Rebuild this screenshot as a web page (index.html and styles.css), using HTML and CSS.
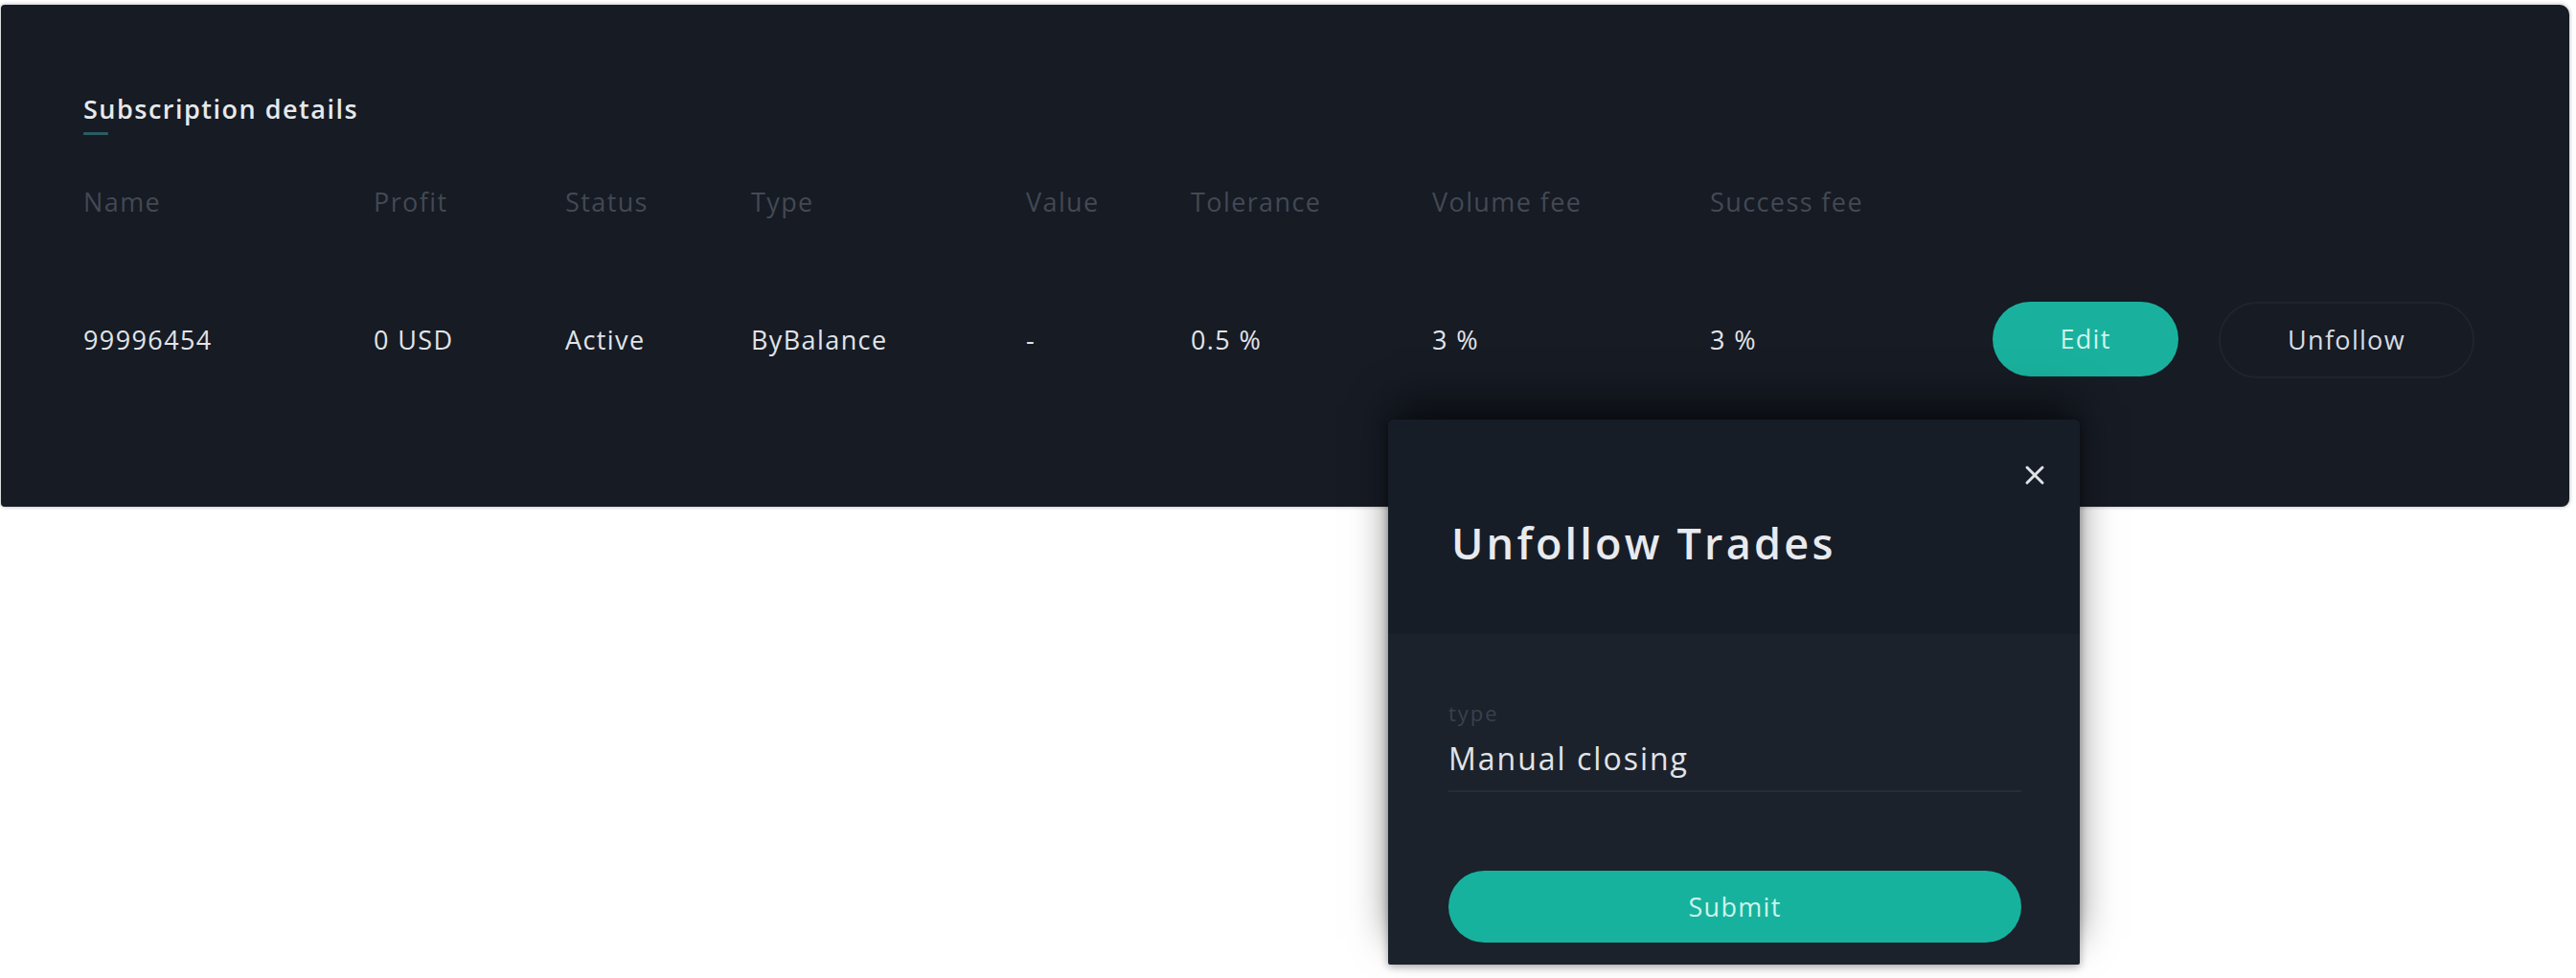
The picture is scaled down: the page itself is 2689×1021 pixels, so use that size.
FILE: index.html
```html
<!DOCTYPE html>
<html lang="en">
<head>
<meta charset="utf-8">
<title>Subscription details</title>
<link rel="stylesheet" href="styles.css">
</head>
<body>
<main class="page">
  <section class="panel">
    <h2 class="panel-title">Subscription details</h2>
    <div class="title-accent"></div>
    <div class="grid head">
      <span>Name</span>
      <span>Profit</span>
      <span>Status</span>
      <span>Type</span>
      <span>Value</span>
      <span>Tolerance</span>
      <span>Volume fee</span>
      <span>Success fee</span>
    </div>
    <div class="grid row">
      <span>99996454</span>
      <span>0 USD</span>
      <span>Active</span>
      <span>ByBalance</span>
      <span>-</span>
      <span>0.5 %</span>
      <span>3 %</span>
      <span>3 %</span>
      <div class="actions">
        <button class="btn btn-edit">Edit</button>
        <button class="btn btn-unfollow">Unfollow</button>
      </div>
    </div>
  </section>

  <div class="modal">
    <div class="modal-head">
      <button class="close" aria-label="Close">
        <svg viewBox="0 0 22 22" width="22" height="22"><path d="M3 3 L19 19 M19 3 L3 19" stroke="#dfe2e6" stroke-width="3" stroke-linecap="round"/></svg>
      </button>
      <h3 class="modal-title">Unfollow Trades</h3>
    </div>
    <div class="modal-body">
      <div class="field">
        <label class="field-label">type</label>
        <div class="field-value">Manual closing</div>
      </div>
      <button class="btn btn-submit">Submit</button>
    </div>
  </div>
</main>
</body>
</html>
```
FILE: styles.css
```css
* { box-sizing: border-box; }
html, body {
  margin: 0;
  padding: 0;
  background: #ffffff;
}
body {
  font-family: "Open Sans", "DejaVu Sans", sans-serif;
  width: 2689px;
  height: 1021px;
  overflow: hidden;
}
.page {
  position: relative;
  width: 2689px;
  height: 1021px;
  padding: 5px 7px 0 1px;
}
.panel {
  background: #161b24;
  border-radius: 4px 10px 8px 4px;
  height: 524px;
  padding: 93px 0 0 86px;
  box-shadow: 0 0 4px rgba(0,0,0,0.35);
}
.panel-title {
  margin: 0;
  font-size: 27px;
  line-height: 32.4px;
  font-weight: 600;
  letter-spacing: 1.5px;
  color: #e7e9ec;
}
.title-accent {
  width: 26px;
  height: 3px;
  margin-top: 8px;
  background: #2b5d61;
  border-radius: 1px;
}
.grid {
  display: grid;
  grid-template-columns: 303px 200px 194px 287px 172px 252px 290px 295px auto;
  align-items: center;
  font-size: 27px;
  line-height: 32.4px;
  letter-spacing: 1.4px;
}
.head {
  margin-top: 54px;
  color: #434953;
}
.row {
  margin-top: 87px;
  color: #e2e4e8;
}
.actions {
  display: flex;
  gap: 42px;
}
.btn {
  font-family: inherit;
  font-size: 27px;
  letter-spacing: 1.3px;
  border: none;
  border-radius: 40px;
  cursor: pointer;
  padding: 0;
}
.btn-edit {
  width: 194px;
  height: 78px;
  background: #19b19d;
  color: #cdf4ea;
}
.btn-unfollow {
  width: 267px;
  height: 80px;
  background: transparent;
  border: 2px solid #1f242d;
  color: #d9dce1;
}
.modal {
  position: absolute;
  left: 1449px;
  top: 438px;
  width: 722px;
  height: 569px;
  border-radius: 6px 6px 2px 2px;
  background: #1b222c;
  box-shadow: 0 -22px 40px -6px rgba(0,0,0,0.6), 0 2px 8px rgba(0,0,0,0.35);
  overflow: hidden;
}
.modal-head {
  position: relative;
  background: #171d27;
  height: 224px;
  padding: 102px 62px 0 66px;
}
.close {
  position: absolute;
  right: 36px;
  top: 47px;
  width: 22px;
  height: 22px;
  padding: 0;
  border: none;
  background: transparent;
  display: flex;
}
.modal-title {
  margin: 0;
  font-size: 45px;
  line-height: 54px;
  font-weight: 600;
  letter-spacing: 3.2px;
  color: #e8eaee;
}
.modal-body {
  padding: 69px 61px 0 63px;
}
.field {
  border-bottom: 2px solid #262d37;
  padding-bottom: 13px;
}
.field-label {
  display: block;
  font-size: 22px;
  line-height: 26.4px;
  letter-spacing: 2px;
  color: #3a414b;
}
.field-value {
  margin-top: 15px;
  font-size: 32px;
  line-height: 40px;
  letter-spacing: 2px;
  color: #e2e4e8;
}
.btn-submit {
  display: block;
  margin-top: 82px;
  width: 598px;
  height: 75px;
  background: #17b29e;
  color: #cdf4ea;
}
```
